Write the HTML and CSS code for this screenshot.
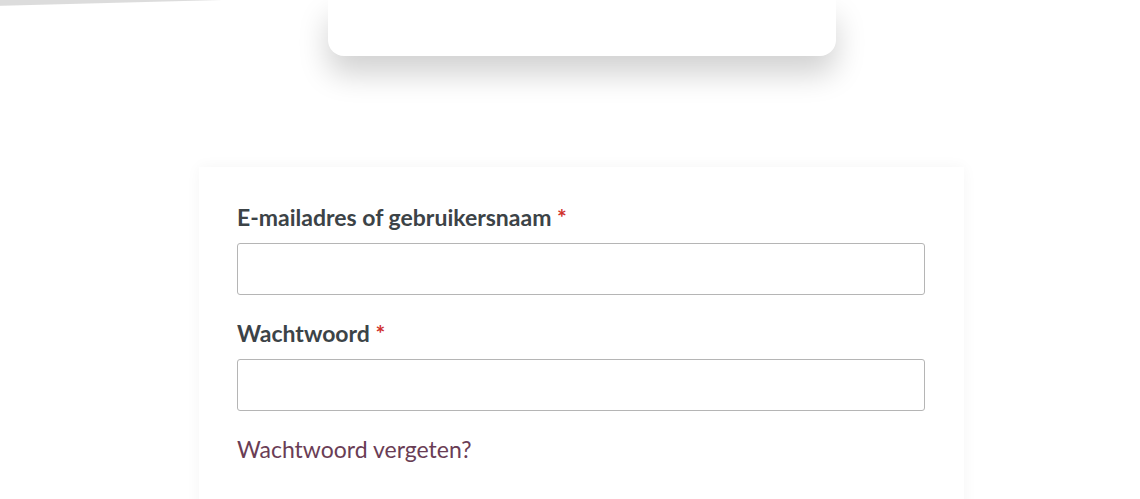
FILE: index.html
```html
<!DOCTYPE html>
<html lang="nl">
<head>
<meta charset="utf-8">
<title>Inloggen</title>
<link rel="stylesheet" href="styles.css">
</head>
<body>
<div class="wedge"></div>
<main class="page">
  <div class="top-card"></div>
  <form class="login-card">
    <p class="field">
      <label class="label" for="username">E-mailadres of gebruikersnaam <span class="req">*</span></label>
      <input class="input" type="text" id="username">
    </p>
    <p class="field">
      <label class="label" for="password">Wachtwoord <span class="req">*</span></label>
      <input class="input" type="password" id="password">
    </p>
    <p class="field">
      <a class="lost" href="#">Wachtwoord vergeten?</a>
    </p>
  </form>
</main>
</body>
</html>
```
FILE: styles.css
```css
html, body {
  margin: 0;
  padding: 0;
  background: #fff;
  overflow: hidden;
}
body {
  font-family: Lato, "Open Sans", sans-serif;
  position: relative;
  height: 499px;
}
.wedge {
  position: absolute;
  left: -30px;
  top: -40px;
  width: 252px;
  height: 40px;
  background: #dcdcdc;
  transform: rotate(-1.5deg);
  transform-origin: right bottom;
  filter: blur(0.6px);
}
.page {
  display: flex;
  flex-direction: column;
  align-items: center;
  padding-left: 23px;
}
.top-card {
  width: 508px;
  height: 56px;
  background: #fff;
  border-radius: 0 0 16px 16px;
  box-shadow: 0 18px 30px rgba(0, 0, 0, 0.18);
}
.login-card {
  margin-top: 111px;
  width: 765px;
  box-sizing: border-box;
  padding: 34px 39px 40px 38px;
  background: #fff;
  box-shadow: 0 0 14px rgba(0, 0, 0, 0.045);
}
.field {
  margin: 0 0 22px;
}
.label {
  display: block;
  font-size: 23px;
  line-height: 33px;
  font-weight: 700;
  color: #3c4347;
  margin-bottom: 9px;
}
.req {
  color: #d0312d;
}
.input {
  display: block;
  width: 100%;
  box-sizing: border-box;
  height: 52px;
  margin: 0;
  border: 1px solid #b5b5b5;
  border-radius: 3px;
  background: #fff;
  font: inherit;
}
.lost {
  font-size: 23px;
  line-height: 33px;
  color: #6a3d55;
  text-decoration: none;
}
```
